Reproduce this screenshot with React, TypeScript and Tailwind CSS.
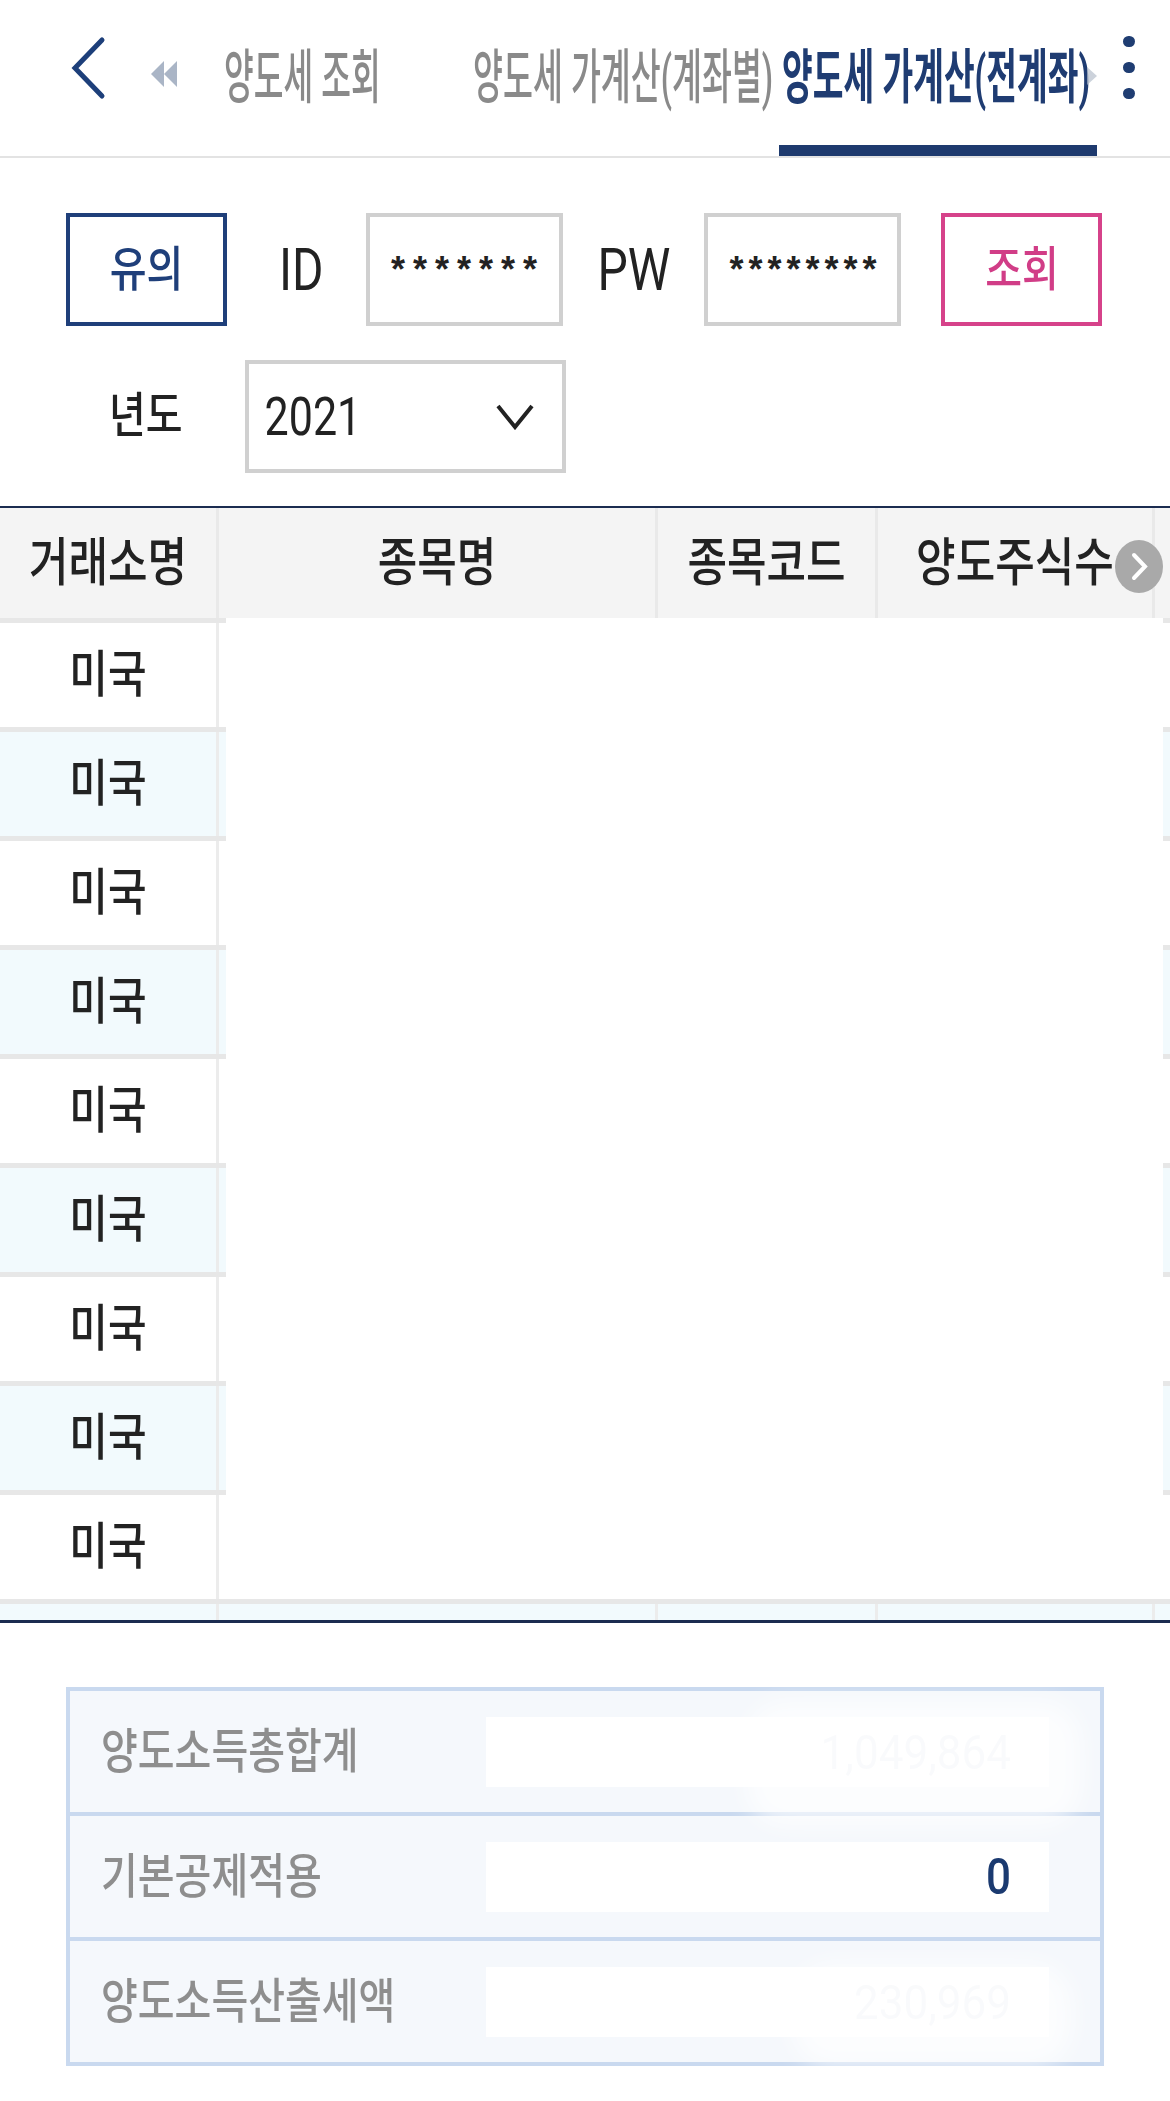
import React from "react";

function S({ children, className = "" }: { children: React.ReactNode; className?: string }) {
  return <span className={"inline-block whitespace-nowrap leading-none " + className}>{children}</span>;
}

function BodyRow({ i }: { i: number }) {
  const bg = i % 2 === 1 ? "bg-[#f2fafd]" : "bg-white";
  return (
    <div className="flex h-[109px]">
      <div className="flex w-[226px] flex-col">
        <div className="h-[5px] bg-[#e7e7e7]" />
        <div className={"flex flex-1 " + bg}>
          <div className="flex w-[216px] items-center justify-center">
            <S className="text-[42px] font-medium text-[#222] scale-y-[1.18]">미국</S>
          </div>
          <div className="w-[3px] bg-[#ececec]" />
          <div className="flex-1" />
        </div>
      </div>
      <div className="flex-1 bg-white" />
      <div className="flex w-[7px] flex-col">
        <div className="h-[5px] bg-[#e7e7e7]" />
        <div className={"flex-1 " + bg} />
      </div>
    </div>
  );
}

function SummaryRow({ label, value, faint }: { label: string; value: string; faint?: boolean }) {
  return (
    <div className="flex h-[121px] items-center pl-[31px]">
      <div className="w-[385px]">
        <S className="text-[40px] font-medium text-[#8e8e8e] scale-y-[1.2]">{label}</S>
      </div>
      <div className="flex h-[70px] w-[563px] items-center justify-end bg-white pr-[38px]">
        <S
          className={
            faint
              ? "text-[44px] text-[#eceff3] scale-y-[1.1]"
              : "text-[44px] font-medium text-[#1b3a70] scale-y-[1.12]"
          }
        >
          {value}
        </S>
      </div>
    </div>
  );
}

export default function App() {
  return (
    <div className="h-[2101px] w-[1170px] overflow-hidden bg-white font-['Roboto','Noto_Sans_CJK_KR',sans-serif]">
      {/* Header tabs */}
      <div className="flex h-[158px] items-center border-b-2 border-[#e3e3e3]">
        <svg className="mb-[20px] ml-[71px]" width="36" height="64" viewBox="0 0 36 64">
          <polyline points="31,4 4,32 31,60" fill="none" stroke="#1d3f7a" strokeWidth="5" strokeLinecap="round" strokeLinejoin="miter" />
        </svg>
        <svg className="mb-[8px] ml-[43px]" width="28" height="28" viewBox="0 0 28 28">
          <polygon points="14,1 1,14 14,27" fill="#aab5c6" />
          <polygon points="27,1 14,14 27,27" fill="#aab5c6" />
        </svg>
        <div className="ml-[46px] w-[155px]">
          <S className="origin-left text-[42px] font-medium text-[#8a8a8a] scale-x-[0.77] scale-y-[1.4]">양도세 조회</S>
        </div>
        <div className="ml-[94px] w-[296px]">
          <S className="origin-left text-[42px] font-medium text-[#8a8a8a] scale-x-[0.775] scale-y-[1.4]">양도세 가계산(계좌별)</S>
        </div>
        <div className="relative ml-[10px] flex w-[318px] items-center self-stretch pl-[3px]">
          <S className="origin-left text-[42px] font-bold text-[#1f3c72] scale-x-[0.795] scale-y-[1.4]">양도세 가계산(전계좌)</S>
          <svg className="absolute left-[308px] top-[67px] opacity-70" width="10" height="18" viewBox="0 0 10 18">
            <polygon points="0,0 10,9 0,18" fill="#b7c0cc" />
          </svg>
          <div className="absolute bottom-0 left-0 h-[11px] w-[318px] bg-[#1e3a6e]" />
        </div>
        <div className="mb-[22px] ml-[26px] flex flex-col gap-[15px]">
          <div className="h-[11px] w-[12px] rounded-full bg-[#1f3d72]" />
          <div className="h-[11px] w-[12px] rounded-full bg-[#1f3d72]" />
          <div className="h-[11px] w-[12px] rounded-full bg-[#1f3d72]" />
        </div>
      </div>

      {/* Login row */}
      <div className="mt-[55px] flex h-[113px] items-center pl-[66px]">
        <div className="flex h-full w-[161px] items-center justify-center border-4 border-[#1f3f7a]">
          <S className="text-[40px] font-medium text-[#1f3f7a] scale-y-[1.2]">유의</S>
        </div>
        <S className="ml-[52px] text-[48px] text-[#222] scale-y-[1.22]">ID</S>
        <div className="ml-[42px] flex h-full w-[197px] items-center justify-center border-4 border-[#d0d0d0]">
          <S className="font-['Liberation_Sans',sans-serif] text-[36px] font-bold tracking-[8px] text-[#222] pl-[8px]">*******</S>
        </div>
        <S className="ml-[35px] text-[48px] text-[#222] scale-y-[1.22]">PW</S>
        <div className="ml-[34px] flex h-full w-[197px] items-center justify-center border-4 border-[#d0d0d0]">
          <S className="font-['Liberation_Sans',sans-serif] text-[36px] font-bold tracking-[5px] text-[#222] pl-[5px]">********</S>
        </div>
        <div className="ml-[40px] flex h-full w-[161px] items-center justify-center border-4 border-[#d6428a]">
          <S className="text-[40px] font-medium text-[#d13d87] scale-y-[1.2]">조회</S>
        </div>
      </div>

      {/* Year row */}
      <div className="mt-[34px] flex h-[113px] items-center pl-[109px]">
        <S className="text-[40px] font-medium text-[#222] scale-y-[1.18]">년도</S>
        <div className="ml-[62px] flex h-full w-[321px] items-center border-4 border-[#d0d0d0] pl-[16px] pr-[28px]">
          <S className="text-[43px] text-[#222] scale-y-[1.25]">2021</S>
          <svg className="ml-auto" width="38" height="27" viewBox="0 0 38 27">
            <polyline points="2,3 19,24 36,3" fill="none" stroke="#222" strokeWidth="4" />
          </svg>
        </div>
      </div>

      {/* Table */}
      <div className="mt-[33px] border-t-2 border-[#1b2c50]">
        <div className="relative flex h-[110px] bg-[#f4f4f4]">
          <div className="flex w-[216px] items-center justify-center">
            <S className="text-[43px] font-medium text-[#222] scale-y-[1.22]">거래소명</S>
          </div>
          <div className="w-[3px] bg-[#e9e9e9]" />
          <div className="flex w-[436px] items-center justify-center">
            <S className="text-[43px] font-medium text-[#222] scale-y-[1.22]">종목명</S>
          </div>
          <div className="w-[3px] bg-[#e9e9e9]" />
          <div className="flex w-[217px] items-center justify-center">
            <S className="text-[43px] font-medium text-[#222] scale-y-[1.22]">종목코드</S>
          </div>
          <div className="w-[3px] bg-[#e9e9e9]" />
          <div className="flex w-[274px] items-center justify-center">
            <S className="text-[43px] font-medium text-[#222] scale-y-[1.22]">양도주식수</S>
          </div>
          <div className="w-[3px] bg-[#e9e9e9]" />
          <div className="flex-1" />
          <svg className="absolute left-[1115px] top-[32px]" width="48" height="53" viewBox="0 0 48 53">
            <ellipse cx="24" cy="26.5" rx="24" ry="26.5" fill="#a9a9a9" />
            <polyline points="19,15 30,26.5 19,38" fill="none" stroke="#fff" strokeWidth="4" strokeLinecap="round" />
          </svg>
        </div>

        {Array.from({ length: 9 }).map((_, i) => (
          <BodyRow key={i} i={i} />
        ))}

        <div className="h-[5px] bg-[#e7e7e7]" />
        <div className="flex h-[16px] bg-[#f2fafd]">
          <div className="w-[216px]" />
          <div className="w-[3px] bg-[#ececec]" />
          <div className="w-[436px]" />
          <div className="w-[3px] bg-[#ececec]" />
          <div className="w-[217px]" />
          <div className="w-[3px] bg-[#ececec]" />
          <div className="w-[274px]" />
          <div className="w-[3px] bg-[#ececec]" />
          <div className="flex-1" />
        </div>
        <div className="h-[3px] bg-[#1b2c50]" />
      </div>

      {/* Summary */}
      <div className="relative ml-[66px] mt-[64px] w-[1038px] border-4 border-[#c9d9ef] bg-[#f5f8fc]">
        <SummaryRow label="양도소득총합계" value="1,049,864" faint />
        <div className="h-[4px] bg-[#c9d9ef]" />
        <SummaryRow label="기본공제적용" value="0" />
        <div className="h-[4px] bg-[#c9d9ef]" />
        <SummaryRow label="양도소득산출세액" value="230,969" faint />
        <div className="absolute left-[676px] top-[10px] h-[125px] w-[335px] rounded-[40px] bg-white/70 blur-md" />
        <div className="absolute left-[722px] top-[272px] h-[104px] w-[280px] rounded-[40px] bg-white/70 blur-md" />
      </div>
    </div>
  );
}
